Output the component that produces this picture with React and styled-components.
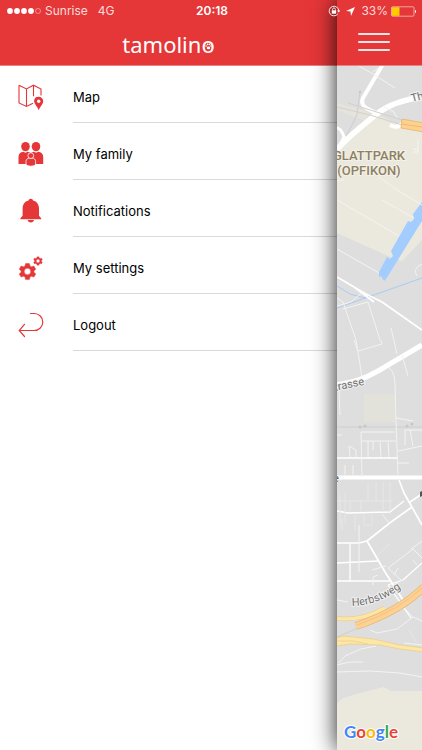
import React from "react";
import styled, { createGlobalStyle } from "styled-components";

const RED = "#e53638";

const GlobalStyle = createGlobalStyle`
  * { box-sizing: border-box; }
  body {
    margin: 0;
    background: #fff;
    color: #000;
    font-family: Inter, "Liberation Sans", sans-serif;
  }
`;

const Screen = styled.div`
  display: grid;
  grid-template-columns: minmax(0, 1fr) 85px;
  grid-template-rows: 22px minmax(0, 1fr);
  height: 100vh;
  overflow: hidden;
`;

const StatusBar = styled.div`
  grid-column: 1 / -1;
  grid-row: 1;
  z-index: 3;
  display: grid;
  grid-template-columns: 1fr auto 1fr;
  align-items: center;
  padding: 0 5px 0 7px;
  color: #fbdcdc;
  font-size: 12px;
  line-height: 22px;
`;

const StatusGroup = styled.div`
  display: flex;
  align-items: center;
  justify-content: ${(p) => (p.$end ? "flex-end" : "flex-start")};
  gap: ${(p) => p.$gap}px;
  white-space: nowrap;
`;

const Clock = styled.time`
  color: #fff;
  font-weight: 600;
`;

const Drawer = styled.aside`
  grid-column: 1;
  grid-row: 1 / -1;
  background: #fff;
`;

const Header = styled.header`
  display: flex;
  align-items: flex-end;
  justify-content: center;
  height: 66px;
  padding-bottom: 7px;
  background: ${RED};
  border-bottom: 1px solid #e98284;
`;

const Logo = styled.h1`
  position: relative;
  margin: 0;
  color: #fff;
  font: 400 22px/28px "Noto Sans", "Open Sans", sans-serif;
`;

const Paw = styled.svg`
  position: absolute;
  right: 3px;
  bottom: 8px;
`;

const MenuList = styled.ul`
  margin: 0;
  padding: 0;
  list-style: none;
`;

const MenuLink = styled.a`
  display: grid;
  grid-template-columns: 55px minmax(0, 1fr);
  height: 57px;
  padding-left: 18px;
  color: #000;
  font-size: 13px;
  text-decoration: none;
`;

const MenuIcon = styled.svg`
  width: 26px;
  height: 26px;
  margin-top: 18px;
  color: ${RED};
`;

const MenuLabel = styled.span`
  display: flex;
  align-items: center;
  padding-top: 6px;
  border-bottom: 1px solid #d9d9d9;
`;

const MapPanel = styled.main`
  grid-column: 2;
  grid-row: 1 / -1;
  z-index: 2;
  display: flex;
  flex-direction: column;
  min-height: 0;
  background: #dedede;
  box-shadow: 0 0 22px rgba(0, 0, 0, 0.9);
`;

const MapHeader = styled.div`
  display: flex;
  flex: none;
  align-items: flex-end;
  height: 66px;
  padding: 0 21px 14px;
  background: ${RED};
  border-bottom: 1px solid #e98284;
`;

const MenuButton = styled.button`
  display: flex;
  flex-direction: column;
  justify-content: space-between;
  width: 32px;
  height: 18px;
  padding: 0;
  border: 0;
  background: none;
  cursor: pointer;
`;

const MenuBar = styled.span`
  height: 2px;
  border-radius: 1px;
  background: #fbe4e4;
`;

const MapDrawing = styled.svg`
  display: block;
  flex: 1;
  width: 100%;
  min-height: 0;
`;

const MapText = styled.text`
  fill: ${(p) => p.$fill || "#707070"};
  stroke: ${(p) => p.$halo || "#f1f1f1"};
  stroke-width: 2px;
  paint-order: stroke;
  font-family: Roboto, sans-serif;
  font-size: ${(p) => p.$size || 11}px;
  font-weight: ${(p) => p.$weight || 400};
`;

const GoogleText = styled.text`
  stroke: #fff;
  stroke-width: 2px;
  paint-order: stroke;
  stroke-linejoin: round;
  font-family: Lato, sans-serif;
  font-size: 17px;
  font-weight: 700;
`;

const MapIcon = () => (
  <MenuIcon viewBox="0 0 26 26" fill="none" stroke="currentColor" strokeWidth="1.1" aria-hidden="true">
    <path d="M1 1.2 8.5 5l7-3.800L23 5v6.500M1 1.200V19l7.500 3.400 6.500-3.200M8.500 5v17M15.500 1.200v11" />
    <path d="M20.700 13.400c-2.300 0-4 1.700-4 3.900 0 2.700 2.600 4.300 4 7.600 1.400-3.300 4-4.900 4-7.600 0-2.200-1.700-3.900-4-3.900Z" fill="currentColor" />
    <circle cx="20.700" cy="17.300" r="1.700" fill="#fff" stroke="none" />
  </MenuIcon>
);

const FamilyIcon = () => (
  <MenuIcon viewBox="0 0 26 26" fill="currentColor" aria-hidden="true">
    <ellipse cx="7.500" cy="5.600" rx="4.300" ry="4.700" />
    <ellipse cx="18" cy="5.600" rx="4.300" ry="4.700" />
    <path d="M.5 23v-7c0-3.200 2-4.700 4.700-5.200l2.300 1 2.300-1c1.300.2 2.300.6 3 1.200.7-.6 1.700-1 3-1.200l2.300 1 2.300-1c2.700.5 4.800 2 4.800 5.200v7Z" />
    <g stroke="#fff" strokeWidth=".8">
      <path d="M8 23.800v-3.300c0-2.100 1.400-3.100 2.900-3.400h3.800c1.600.3 2.900 1.300 2.900 3.400v3.300c-2.300 1.900-7.300 1.900-9.600 0Z" />
      <circle cx="12.800" cy="14.600" r="2.900" />
    </g>
  </MenuIcon>
);

const BellIcon = () => (
  <MenuIcon viewBox="0 0 26 26" fill="currentColor" aria-hidden="true">
    <path d="M12.800.8c1.300 0 2 .7 2.200 1.700 4.200.9 6 4.300 6 8.200v7l2.200 2.500v1.100H2.400v-1.100l2.200-2.500v-7c0-3.900 1.800-7.300 6-8.200.2-1 .9-1.700 2.200-1.700Z" />
    <path d="M9.600 22h6.400c-.4 3.200-6 3.200-6.400 0Z" />
  </MenuIcon>
);

const gearPath =
  "M-1.900-8h3.800l.6 2.500 1.400.8 2.500-.8 1.900 3.200-1.900 1.700v1.300l1.900 1.700-1.900 3.200-2.500-.8-1.400.8-.6 2.500h-3.800l-.6-2.500-1.400-.8-2.500.8-1.900-3.200 1.900-1.700v-1.300l-1.900-1.700 1.900-3.200 2.500.8 1.400-.8ZM0-3.200a3.200 3.200 0 1 0 0 6.400 3.200 3.200 0 0 0 0-6.400Z";

const GearsIcon = () => (
  <MenuIcon viewBox="0 0 26 26" fill="currentColor" fillRule="evenodd" aria-hidden="true">
    <path d={gearPath} transform="translate(9.500 16.500)" stroke="currentColor" strokeWidth=".4" strokeLinejoin="round" />
    <path d={gearPath} transform="translate(20 6) scale(.54)" stroke="currentColor" strokeWidth=".3" />
  </MenuIcon>
);

const LogoutIcon = () => (
  <MenuIcon viewBox="0 0 26 26" fill="none" stroke="currentColor" strokeWidth="1.200" strokeLinecap="round" aria-hidden="true">
    <path d="M12.500 1.500h3.800a8.500 8.500 0 0 1 0 17H1.200M6.500 12.300l-5.300 6.200 5.300 6" />
  </MenuIcon>
);

const menuItems = [
  { label: "Map", Icon: MapIcon },
  { label: "My family", Icon: FamilyIcon },
  { label: "Notifications", Icon: BellIcon },
  { label: "My settings", Icon: GearsIcon },
  { label: "Logout", Icon: LogoutIcon },
];

const SignalDots = () => (
  <svg width="35" height="8" viewBox="0 0 35 8" role="img" aria-label="Signal 4 of 5">
    {[3, 10, 17, 24].map((x) => (
      <circle key={x} cx={x} cy="4" r="2.900" fill="#fff" />
    ))}
    <circle cx="31" cy="4" r="2.500" fill="none" stroke="#f3a3a4" strokeWidth=".8" />
  </svg>
);

const RotationLock = () => (
  <svg width="12" height="12" viewBox="0 0 12 12" fill="none" stroke="#fff" aria-hidden="true">
    <path d="M9.700 9.100A4.800 4.800 0 1 1 10.800 6" strokeWidth=".9" />
    <path d="M9.200 5.600h3l-1.500 2Z" fill="#fff" stroke="none" />
    <path d="M4.600 5.500V4.300a1.400 1.400 0 0 1 2.800 0v1.200" strokeWidth=".8" />
    <path d="M3.800 5.300h4.400v3.400H3.800Z" fill="#fff" stroke="none" />
  </svg>
);

const LocationArrow = () => (
  <svg width="9" height="9" viewBox="0 0 9 9" fill="#fff" aria-hidden="true">
    <path d="M9 0 5 9 4.500 4.500 0 4Z" />
  </svg>
);

const Battery = () => (
  <svg width="26" height="11" viewBox="0 0 26 11" role="img" aria-label="Battery">
    <rect x=".5" y=".8" width="22.500" height="9.400" rx="1" fill="none" stroke="#f3b0b1" strokeWidth=".9" />
    <rect x="1" y="1.200" width="7.500" height="8.600" fill="#fc0" />
    <path d="M24 3.800c1.400.3 1.400 3.200 0 3.500Z" fill="#fff" />
  </svg>
);

const CityMap = () => (
  <MapDrawing viewBox="337 66 85 684" preserveAspectRatio="xMinYMin slice" role="img" aria-label="Map of Opfikon">
    <rect x="337" y="66" width="85" height="684" fill="#dedede" />
    <g fill="#ebe9de">
      <path d="M337 150 376 114 400 125 422 132V240L402 261 388 256 337 233Z" />
      <path d="M337 703 343 698 360 693 384 687 391 691H422V750H337Z" />
      <path d="M337 103 378 114 368 122 337 110Z" fill="#e5e3db" />
      <path d="M364 394h31v28h-31Z" fill="#e2e2da" />
    </g>

    <path d="M422 202 413 214 414 219 411 222 408 221 391 251 393 256 390 259 387 257 379 272 379 277 381 276 384 281 386 279 422 221Z" fill="#a3ccff" />
    <g fill="none" stroke="#abcbf3" strokeWidth="1">
      <path d="M337 308 422 278M337 286 350 294 365 298 372 295" />
    </g>

    <g fill="none" stroke="#cecece" strokeWidth="1">
      <path d="M360 91 357 115 338 152M337 427H422M337 637 358 628" />
    </g>
    <g fill="#c6c6c6">
      <circle cx="360" cy="92" r="1.200" />
      <circle cx="360" cy="427" r="1.500" />
      <circle cx="365" cy="426" r="1.500" />
      <circle cx="407" cy="426" r="1.500" />
      <circle cx="412" cy="424" r="1.500" />
    </g>

    <g fill="none" stroke="#fff" strokeLinejoin="round">
      <path d="M383 64 363 98Q360 105 368 109L378 114" strokeWidth="4" />
      <path d="M335 152Q344 140 378 113Q394 101 422 97" strokeWidth="5.500" />
      <path d="M337 128Q341 128 344 137L339 147" strokeWidth="3" />
      <path d="M390 125Q397 129 402 124" strokeWidth="4" />
      <path d="M335 385Q357 383 378 371L422 345" strokeWidth="5" />
      <path d="M337 477.500H422" strokeWidth="4" />
      <path d="M337 277 366 294 382 302 422 330M354 287 374 302" strokeWidth="1.800" />
      <path d="M399 480 404 493 422 525M337 543H359L367 541 391 522 412 507M410 502 422 494M367 541 385 572 403 600" strokeWidth="1.700" />
      <path d="M337 458H398M337 511 348 513 390 512 404 501M350 543V582M337 563 378 561M337 581H390M388 585 403 580 422 563M388 585 411 618" strokeWidth="1.300" />
    </g>

    <g fill="none" stroke="#f3f3f3" strokeWidth="1">
      <path d="M359 66 373 74 395 88M373 72 378 68M384 107 394 112 397 118M418 140V149M413 149h5v3h-5" />
      <path d="M337 200 399 236M382 200 414 218M337 249 379 273M337 181 344 180M379 177 397 190 422 205" />
      <path d="M337 306 351 302 363 292M337 298 343 302 356 340 362 377M343 309 368 302 380 340M391 328 394 341 397 354M422 264Q412 269 417 276" />
      <path d="M354 340 358 351 382 344 381 340M389 368Q395 372 395 385L396 420 398 475M402 355 408 376M339 390 340 415M396 418 413 421" />
      <path d="M362 477 361 432H395M361 441H396M368 441V457M373 441V450M380 441 381 457M388 441 389 457M398 451 422 446M398 463H409M405 430V445M410 430 413 446M422 430H405M350 457 349 446 356 450V457M337 435H342M345 465V475M353 465V475" />
      <path d="M359 525V572M382 514 390 524M388 568 413 549 422 558M388 568 402 581M394 575 398 568M411 549 422 541M373 585V577L378 575M372 570 386 566M413 560 417 565M337 600 348 602" />
      <path d="M339 663 345 656 361 649 376 646M337 665 350 662 363 662M337 672 370 671 400 673 422 677M370 630 377 633 397 629 413 617 406 610M413 617 422 621M404 643 422 645" />
    </g>
    <g fill="none" stroke="#e7e7e7" strokeWidth="1">
      <path d="M340 495V525M345 493V524M350 501V512M361 500V512M368 483V501M376 483V501M383 482V512M390 482V510M337 501H392M342 518V530M355 515V530M364 515V525H372V515M377 556 390 543M409 630 416 642" />
    </g>
    <g fill="none" stroke="#d3d1ca" strokeWidth="1">
      <path d="M337 107 370 115 402 125M348 103 402 120" />
    </g>

    <path d="M402 119 424 123V132L401 128Z" fill="#fdd28f" stroke="#e9b46b" strokeWidth=".8" />
    <path d="M402 124 422 127" stroke="#e9b46b" strokeWidth=".8" />

    <g fill="none">
      <path d="M335 618Q360 622 385 608" stroke="#ebcf8a" strokeWidth="4.500" />
      <path d="M335 618Q360 622 385 608" stroke="#fde5a4" strokeWidth="3.200" />
      <path d="M356 626Q400 611 424 587" stroke="#e6b775" strokeWidth="8" />
      <path d="M356 626Q400 611 424 587" stroke="#fdd093" strokeWidth="6.500" />
      <path d="M357 625Q400 610 424 586" stroke="#eebb78" strokeWidth=".7" />
    </g>
    <path d="M336 638 344 636 373 639 400 645 424 648V652L400 649 380 645 350 644 336 646Z" fill="#fde6a6" stroke="#ebcf8a" strokeWidth=".8" />
    <path d="M337 641 353 641 368 644" fill="none" stroke="#ebcf8a" strokeWidth=".8" />

    <MapText x="412" y="102" transform="rotate(-14 412 102)">Th</MapText>
    <MapText x="369" y="160" textAnchor="middle" $size={13} $weight={500} $fill="#8d8062" $halo="#f3f1e9">GLATTPARK</MapText>
    <MapText x="369" y="175" textAnchor="middle" $size={13} $weight={500} $fill="#8d8062" $halo="#f3f1e9">(OPFIKON)</MapText>
    <MapText x="335" y="391" transform="rotate(-12 335 391)">trasse</MapText>
    <MapText x="333" y="482" $fill="#555">e</MapText>
    <path d="M420 492l2-1v5l-2 1Z" fill="#555" />
    <path id="herbstweg" d="M352 606Q378 606 404 586" fill="none" />
    <MapText>
      <textPath href="#herbstweg">Herbstweg</textPath>
    </MapText>

    <GoogleText x="344" y="738">
      <tspan fill="#4285f4">G</tspan>
      <tspan fill="#ea4335">o</tspan>
      <tspan fill="#fbbc05">o</tspan>
      <tspan fill="#4285f4">g</tspan>
      <tspan fill="#34a853">l</tspan>
      <tspan fill="#ea4335">e</tspan>
    </GoogleText>
  </MapDrawing>
);

export default function App() {
  return (
    <Screen>
      <GlobalStyle />
      <StatusBar>
        <StatusGroup $gap={10}>
          <StatusGroup $gap={3}>
            <SignalDots />
            <span>Sunrise</span>
          </StatusGroup>
          <span>4G</span>
        </StatusGroup>
        <Clock>20:18</Clock>
        <StatusGroup $end $gap={6}>
          <RotationLock />
          <LocationArrow />
          <StatusGroup $gap={3}>
            <span>33%</span>
            <Battery />
          </StatusGroup>
        </StatusGroup>
      </StatusBar>

      <Drawer>
        <Header>
          <Logo>
            tamolino
            <Paw width="7" height="7" viewBox="0 0 6 6" fill="#fff" aria-hidden="true">
              <ellipse cx="3" cy="4.200" rx="1.500" ry="1.200" />
              <circle cx=".9" cy="2.600" r=".7" />
              <circle cx="2.200" cy="1.200" r=".7" />
              <circle cx="3.800" cy="1.200" r=".7" />
              <circle cx="5.100" cy="2.600" r=".7" />
            </Paw>
          </Logo>
        </Header>
        <nav aria-label="Main">
          <MenuList>
            {menuItems.map(({ label, Icon }) => (
              <li key={label}>
                <MenuLink href="#">
                  <Icon />
                  <MenuLabel>{label}</MenuLabel>
                </MenuLink>
              </li>
            ))}
          </MenuList>
        </nav>
      </Drawer>

      <MapPanel>
        <MapHeader>
          <MenuButton type="button" aria-label="Close menu">
            <MenuBar />
            <MenuBar />
            <MenuBar />
          </MenuButton>
        </MapHeader>
        <CityMap />
      </MapPanel>
    </Screen>
  );
}
